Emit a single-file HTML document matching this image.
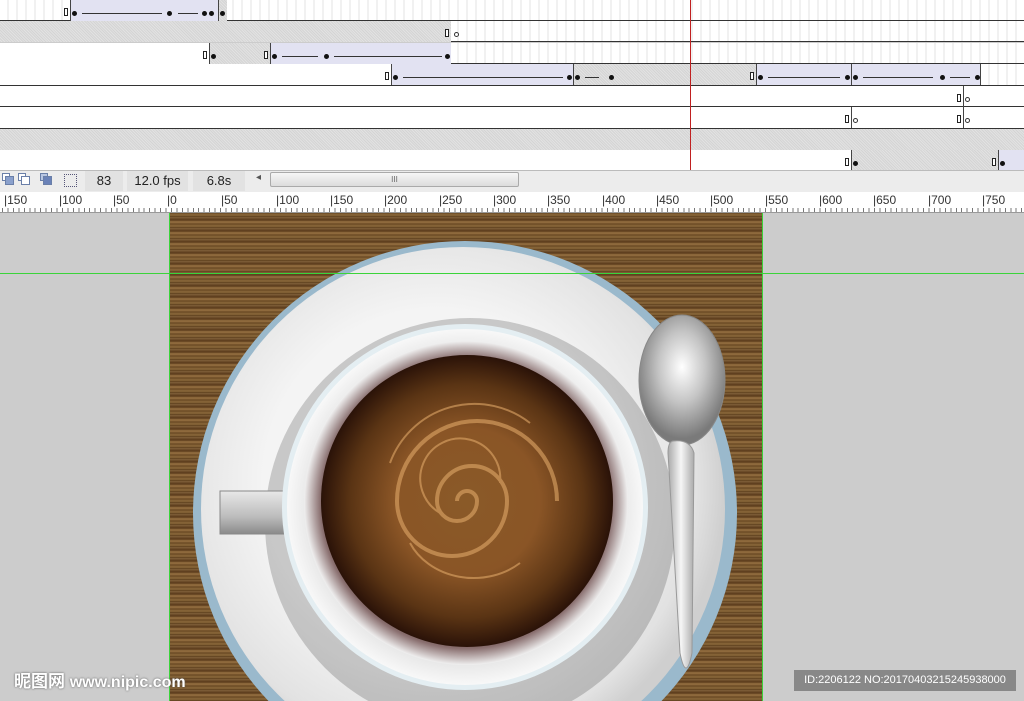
<!DOCTYPE html>
<html><head><meta charset="utf-8"><style>
*{margin:0;padding:0;box-sizing:border-box}
html,body{width:1024px;height:701px;overflow:hidden}
body{background:#cccccc;position:relative;font-family:"Liberation Sans",sans-serif}
.a{position:absolute}
.row{position:absolute;left:0;width:1024px;height:21px;border-bottom:1px solid #333;background:#fff repeating-linear-gradient(90deg,#fff 0,#fff 7px,#f1f1f1 7px,#f1f1f1 9px)}
.g{position:absolute;top:0;height:21px;background:#dcdcdc repeating-linear-gradient(45deg,#d4d4d4 0,#d4d4d4 1px,#e2e2e2 1px,#e2e2e2 2px);border-left:1px solid #444}
.b{position:absolute;top:0;height:21px;background:#e2e2f2;border-left:1px solid #444}
.k{position:absolute;top:11px;width:5px;height:5px;border-radius:50%;background:#111}
.o{position:absolute;top:11px;width:5px;height:5px;border-radius:50%;border:1px solid #333;background:#fff}
.r{position:absolute;top:8px;width:4px;height:8px;border:1px solid #222;background:#fff}
.ar{position:absolute;top:13px;height:1px;background:#333}
</style></head><body>
<div class="row" style="top:0"><div class="b" style="left:70px;width:148px"></div><div class="g" style="left:218px;width:9px"></div><div class="r" style="left:64px"></div><div class="k" style="left:72px"></div><div class="ar" style="left:82px;width:80px"></div><div class="k" style="left:167px"></div><div class="ar" style="left:178px;width:20px"></div><div class="k" style="left:202px"></div><div class="k" style="left:209px"></div><div class="k" style="left:220px"></div></div>
<div class="row" style="top:21px"><div class="g" style="left:0;width:451px;border-left:0"></div><div class="r" style="left:445px"></div><div class="o" style="left:454px"></div></div>
<div class="row" style="top:43px;height:21px"><div class="a" style="left:0;top:0;width:209px;height:21px;background:#fff"></div><div class="g" style="left:209px;width:61px"></div><div class="b" style="left:270px;width:181px"></div><div class="r" style="left:203px"></div><div class="k" style="left:211px"></div><div class="r" style="left:264px"></div><div class="k" style="left:272px"></div><div class="ar" style="left:282px;width:36px"></div><div class="k" style="left:324px"></div><div class="ar" style="left:334px;width:108px"></div><div class="k" style="left:445px"></div></div>
<div class="row" style="top:64px;height:22px"><div class="a" style="left:0;top:0;width:391px;height:21px;background:#fff"></div><div class="b" style="left:391px;width:182px"></div><div class="g" style="left:573px;width:183px"></div><div class="b" style="left:756px;width:95px"></div><div class="b" style="left:851px;width:130px;border-right:1px solid #444"></div><div class="r" style="left:385px"></div><div class="k" style="left:393px"></div><div class="ar" style="left:403px;width:160px"></div><div class="k" style="left:567px"></div><div class="k" style="left:575px"></div><div class="ar" style="left:585px;width:14px"></div><div class="k" style="left:609px"></div><div class="r" style="left:750px"></div><div class="k" style="left:758px"></div><div class="ar" style="left:768px;width:72px"></div><div class="k" style="left:845px"></div><div class="k" style="left:853px"></div><div class="ar" style="left:863px;width:70px"></div><div class="k" style="left:940px"></div><div class="ar" style="left:950px;width:20px"></div><div class="k" style="left:975px"></div></div>
<div class="row" style="top:86px;background:#fff"><div class="a" style="left:963px;top:0;width:1px;height:21px;background:#444"></div><div class="r" style="left:957px"></div><div class="o" style="left:965px"></div></div>
<div class="row" style="top:107px;height:22px;background:#fff"><div class="a" style="left:851px;top:0;width:1px;height:21px;background:#444"></div><div class="a" style="left:963px;top:0;width:1px;height:21px;background:#444"></div><div class="r" style="left:845px"></div><div class="o" style="left:853px"></div><div class="r" style="left:957px"></div><div class="o" style="left:965px"></div></div>
<div class="row" style="top:129px"><div class="g" style="left:0;width:1024px;border-left:0"></div></div>
<div class="row" style="top:150px;height:20px;border-bottom:0;background:#fff"><div class="g" style="left:851px;width:147px;height:20px"></div><div class="b" style="left:998px;width:30px;height:20px"></div><div class="r" style="left:845px"></div><div class="k" style="left:853px"></div><div class="r" style="left:992px"></div><div class="k" style="left:1000px"></div></div>
<div class="a" style="left:690px;top:0;width:1px;height:170px;background:#c02020"></div>
<div class="a" style="left:0;top:170px;width:1024px;height:22px;background:#ececec;border-top:1px solid #bbb"></div>
<div class="a" style="left:2px;top:173px;width:8px;height:8px;border:1px solid #6a7fa8;background:#fff"></div><div class="a" style="left:5px;top:176px;width:9px;height:9px;border:1px solid #6a7fa8;background:#8aa0cc"></div>
<div class="a" style="left:18px;top:173px;width:8px;height:8px;border:1px solid #6a7fa8;background:#fff"></div><div class="a" style="left:21px;top:176px;width:9px;height:9px;border:1px solid #6a7fa8;background:#fff"></div>
<div class="a" style="left:40px;top:173px;width:8px;height:8px;border:1px solid #6a7fa8;background:#b8c6e2"></div><div class="a" style="left:43px;top:176px;width:9px;height:9px;border:1px solid #6a7fa8;background:#6a82b8"></div>
<div class="a" style="left:64px;top:174px;width:13px;height:13px;border:1px dotted #557"></div>
<div class="a" style="left:85px;top:171px;width:38px;height:20px;background:#e2e2e2;font-size:13px;color:#222;text-align:center;line-height:20px">83</div>
<div class="a" style="left:127px;top:171px;width:61px;height:20px;background:#e2e2e2;font-size:13px;color:#222;text-align:center;line-height:20px">12.0 fps</div>
<div class="a" style="left:193px;top:171px;width:52px;height:20px;background:#e2e2e2;font-size:13px;color:#222;text-align:center;line-height:20px">6.8s</div>
<div class="a" style="left:256px;top:172px;font-size:10px;color:#555">◂</div>
<div class="a" style="left:270px;top:172px;width:249px;height:15px;border:1px solid #aaa;border-radius:2px;background:linear-gradient(#f6f6f6,#dcdcdc);font-size:8px;text-align:center;color:#666;line-height:13px">III</div>
<div class="a" style="left:0;top:192px;width:1024px;height:21px;background:#fff;border-bottom:1px solid #999;overflow:hidden">
 <div class="a" style="left:2px;top:16px;width:1024px;height:4px;background:repeating-linear-gradient(90deg,#777 0,#777 1px,transparent 1px,transparent 5.45px)"></div>
</div>
<div class="a" style="left:0;top:193px;width:1024px;height:18px;font-size:12px;color:#333">
<span class="a" style="left:4px">|150</span><span class="a" style="left:59px">|100</span><span class="a" style="left:113px">|50</span><span class="a" style="left:167px">|0</span><span class="a" style="left:221px">|50</span><span class="a" style="left:276px">|100</span><span class="a" style="left:330px">|150</span><span class="a" style="left:384px">|200</span><span class="a" style="left:439px">|250</span><span class="a" style="left:493px">|300</span><span class="a" style="left:547px">|350</span><span class="a" style="left:602px">|400</span><span class="a" style="left:656px">|450</span><span class="a" style="left:710px">|500</span><span class="a" style="left:765px">|550</span><span class="a" style="left:819px">|600</span><span class="a" style="left:873px">|650</span><span class="a" style="left:928px">|700</span><span class="a" style="left:982px">|750</span></div>
<div class="a" style="left:170px;top:213px;width:592px;height:488px;overflow:hidden;background:#7a5630 repeating-linear-gradient(0deg,#5a3c1c 0,#8d6a3c 2px,#6a4a24 4px,#9a7444 6px,#5a3a1a 8px,#80603a 11px)">
 <svg width="592" height="488" style="position:absolute;left:0;top:0">
  <defs>
   <radialGradient id="sau" cx="0.45" cy="0.45" r="0.55"><stop offset="0.6" stop-color="#f4f4f4"/><stop offset="0.9" stop-color="#e2e2e2"/><stop offset="1" stop-color="#cfcfcf"/></radialGradient>
   <radialGradient id="cup" cx="0.5" cy="0.5" r="0.5"><stop offset="0.8" stop-color="#dcdcdc"/><stop offset="1" stop-color="#f8f8f8"/></radialGradient>
   <radialGradient id="in" cx="0.5" cy="0.5" r="0.5"><stop offset="0.78" stop-color="#3a1c12"/><stop offset="0.9" stop-color="#8a7070"/><stop offset="1" stop-color="#f0f0f0"/></radialGradient>
   <radialGradient id="cof" cx="0.5" cy="0.5" r="0.5"><stop offset="0" stop-color="#8a5a28"/><stop offset="0.5" stop-color="#8a5526"/><stop offset="0.8" stop-color="#5a3414"/><stop offset="1" stop-color="#2a1208"/></radialGradient>
   <radialGradient id="sp" cx="0.5" cy="0.4" r="0.55"><stop offset="0" stop-color="#fff"/><stop offset="0.5" stop-color="#c4c4c4"/><stop offset="1" stop-color="#7a7a7a"/></radialGradient>
   <linearGradient id="hd" x1="0" y1="0" x2="0" y2="1"><stop offset="0" stop-color="#e8e8e8"/><stop offset="0.6" stop-color="#bcbcbc"/><stop offset="1" stop-color="#8a8a8a"/></linearGradient>
   <linearGradient id="sh" x1="0" x2="1"><stop offset="0" stop-color="#aaa"/><stop offset="0.5" stop-color="#f6f6f6"/><stop offset="1" stop-color="#aaa"/></linearGradient>
  </defs>
  <circle cx="295" cy="300" r="272" fill="#9ab9cc"/>
  <circle cx="293" cy="296" r="262" fill="url(#sau)"/>
  <circle cx="300" cy="310" r="205" fill="#000" opacity="0.18"/>
  <rect x="50" y="278" width="66" height="43" fill="url(#hd)" stroke="#888"/>
  <circle cx="295" cy="294" r="183" fill="#e4eef2"/>
  <circle cx="295" cy="294" r="178" fill="url(#cup)"/>
  <circle cx="296" cy="290" r="162" fill="url(#in)"/>
  <circle cx="297" cy="288" r="146" fill="url(#cof)"/>
  <g fill="none" stroke="#e0a868" opacity="0.6">
   <path stroke-width="4" d="M297 288 m-10 0 a10 10 0 1 1 20 0 a20 20 0 1 1 -40 0 a35 35 0 1 1 70 0 a55 55 0 1 1 -110 0 a80 80 0 1 1 160 0"/>
   <path stroke-width="2" d="M270 300 a40 40 0 1 1 60 -30 M240 330 a70 60 0 0 0 110 20 M220 250 a90 90 0 0 1 140 -40"/>
  </g>
  <ellipse cx="512" cy="167" rx="43" ry="65" fill="url(#sp)" stroke="#888"/>
  <path d="M503 228 Q520 226 524 240 L522 440 Q516 470 510 440 L498 240 Q498 229 503 228Z" fill="url(#sh)" stroke="#999"/>
 </svg>
</div>
<div class="a" style="left:169px;top:213px;width:1px;height:488px;background:#3ad43a"></div>
<div class="a" style="left:762px;top:213px;width:1px;height:488px;background:#3ad43a"></div>
<div class="a" style="left:0;top:273px;width:1024px;height:1px;background:#3ad43a"></div>
<div class="a" style="left:14px;top:672px;font-size:17px;color:#fff;font-weight:bold;font-family:'Liberation Sans','Noto Sans CJK SC',sans-serif;text-shadow:0 0 2px #555;white-space:nowrap;line-height:20px">昵图网 <span style="font-size:16px">www.nipic.com</span></div>
<div class="a" style="left:794px;top:670px;width:222px;height:21px;background:#888;color:#fff;font-size:11px;line-height:21px;text-align:center">ID:2206122 NO:20170403215245938000</div>
</body></html>
